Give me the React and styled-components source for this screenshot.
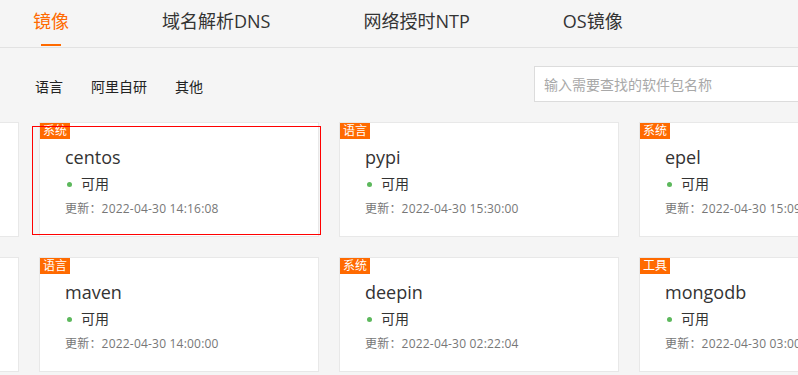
import React from "react";
import styled, { createGlobalStyle } from "styled-components";

const Global = createGlobalStyle`
  html, body { margin: 0; padding: 0; }
  body {
    background: #f5f5f5;
    font-family: "Open Sans", "Noto Sans CJK SC", sans-serif;
    color: #333;
    overflow: hidden;
  }
  * { box-sizing: border-box; }
`;

const Page = styled.div`
  width: 798px;
  height: 375px;
  overflow: hidden;
`;

const TabBar = styled.div`
  height: 48px;
  display: flex;
  gap: 93px;
  padding-left: 33px;
  border-bottom: 1px solid #e2e2e2;
`;

const Tab = styled.div`
  position: relative;
  font-size: 18px;
  line-height: 42px;
  height: 47px;
  white-space: nowrap;
  color: ${(p) => (p.$active ? "#ff6a00" : "#333")};
  &::after {
    content: "";
    display: ${(p) => (p.$active ? "block" : "none")};
    position: absolute;
    left: 50%;
    bottom: 1px;
    width: 20px;
    height: 2px;
    margin-left: -10px;
    background: #ff6a00;
  }
`;

const FilterRow = styled.div`
  display: flex;
  padding: 18px 0 0 35px;
  height: 54px;
`;

const FilterList = styled.div`
  flex: 0 0 499px;
  display: flex;
  gap: 28px;
  padding-top: 11px;
`;

const Filter = styled.span`
  font-size: 14px;
  line-height: 20px;
  color: #222;
  white-space: nowrap;
`;

const Search = styled.input`
  flex: 0 0 300px;
  height: 36px;
  border: 1px solid #dcdcdc;
  background: #fff;
  padding: 0 9px;
  font-family: inherit;
  font-size: 14px;
  outline: none;
  &::placeholder { color: #a8a8a8; }
`;

const Grid = styled.div`
  display: grid;
  grid-template-columns: repeat(4, 280px);
  grid-auto-rows: 115px;
  gap: 20px;
  margin: 20px 0 0 -261px;
`;

const Card = styled.div`
  position: relative;
  background: #fff;
  border: 1px solid #e8e8e8;
`;

const Badge = styled.div`
  display: inline-block;
  height: 16px;
  padding: 0 3px;
  background: #ff6a00;
  color: #fff;
  font-size: 12px;
  line-height: 16px;
  vertical-align: top;
`;

const Body = styled.div`
  padding-left: 25px;
`;

const Name = styled.div`
  margin-top: 0;
  font-size: 18px;
  line-height: 24px;
  color: #333;
`;

const Status = styled.div`
  margin-top: 5px;
  display: flex;
  align-items: center;
  font-size: 14px;
  line-height: 20px;
  color: #333;
  &::before {
    content: "";
    width: 5px;
    height: 5px;
    border-radius: 50%;
    background: #5cb85c;
    margin: 0 9px 0 2px;
  }
`;

const Updated = styled.div`
  margin-top: 6px;
  font-size: 12px;
  line-height: 18px;
  letter-spacing: 0.2px;
  color: #777;
  white-space: nowrap;
`;

const Highlight = styled.div`
  position: absolute;
  left: -8px;
  top: 3px;
  width: 289px;
  height: 109px;
  border: 1px solid #f00;
  pointer-events: none;
`;

const tabs = ["镜像", "域名解析DNS", "网络授时NTP", "OS镜像"];
const filters = ["语言", "阿里自研", "其他"];

const rows = [
  [
    null,
    { tag: "系统", name: "centos", time: "2022-04-30 14:16:08", hl: true },
    { tag: "语言", name: "pypi", time: "2022-04-30 15:30:00" },
    { tag: "系统", name: "epel", time: "2022-04-30 15:09:00" },
  ],
  [
    null,
    { tag: "语言", name: "maven", time: "2022-04-30 14:00:00" },
    { tag: "系统", name: "deepin", time: "2022-04-30 02:22:04" },
    { tag: "工具", name: "mongodb", time: "2022-04-30 03:00:00" },
  ],
];

export default function App() {
  return (
    <Page>
      <Global />
      <TabBar>
        {tabs.map((t, i) => (
          <Tab key={t} $active={i === 0}>{t}</Tab>
        ))}
      </TabBar>
      <FilterRow>
        <FilterList>
          {filters.map((f) => (
            <Filter key={f}>{f}</Filter>
          ))}
        </FilterList>
        <Search placeholder="输入需要查找的软件包名称" />
      </FilterRow>
      <Grid>
        {rows.flat().map((c, i) =>
          c ? (
            <Card key={c.name}>
              <Badge>{c.tag}</Badge>
              <Body>
                <Name>{c.name}</Name>
                <Status>可用</Status>
                <Updated>更新：{c.time}</Updated>
              </Body>
              {c.hl && <Highlight />}
            </Card>
          ) : (
            <Card key={"edge" + i} />
          )
        )}
      </Grid>
    </Page>
  );
}
